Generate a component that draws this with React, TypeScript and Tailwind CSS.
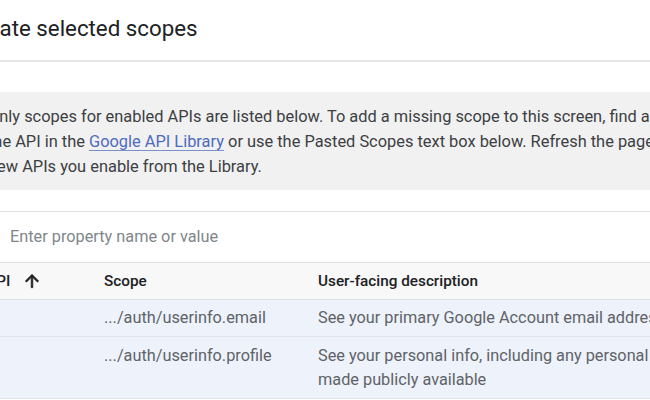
import React from "react";

export default function App() {
  return (
    <div
      className="w-[650px] h-[400px] overflow-hidden bg-white text-[#3c4043]"
      style={{ fontFamily: "Roboto, 'Liberation Sans', sans-serif" }}
    >
      <div className="h-[62px] flex items-start pt-[12px] border-b-2 border-[#e6e6e6]">
        <h1 className="ml-[-40px] text-[22.3px] leading-[32px] font-normal text-[#202124] whitespace-nowrap">
          Update selected scopes
        </h1>
      </div>
      <div className="h-[30px]" />
      <div className="h-[98px] bg-[#f1f1f1] pt-[12px]">
        <p className="ml-[-12px] text-[16.4px] leading-[25px] whitespace-nowrap">
          Only scopes for enabled APIs are listed below. To add a missing scope to this screen, find and enable
          <br />
          the API in the{" "}
          <a className="text-[#4d6bbf] underline underline-offset-[3px] decoration-[#7b8fc9]">Google API Library</a>{" "}
          or use the Pasted Scopes text box below. Refresh the page to see any
          <br />
          new APIs you enable from the Library.
        </p>
      </div>
      <div className="h-[21px]" />
      <div className="h-[51px] border-t border-[#e0e0e0] flex items-center pl-[10px]">
        <span className="text-[16.3px] text-[#80868b] whitespace-nowrap">Enter property name or value</span>
      </div>
      <div className="h-[38px] border-t border-b border-[#e0e0e0] bg-[#f8f8f8] flex items-center text-[15.3px] font-medium text-[#202124] whitespace-nowrap">
        <div className="w-[104px] shrink-0 flex items-center">
          <span className="ml-[-14px]">API</span>
          <svg width="20" height="20" viewBox="0 0 24 24" className="ml-[12px]">
            <path d="M4 12l1.41 1.41L11 7.83V20h2V7.83l5.58 5.59L20 12l-8-8-8 8z" fill="#202124" stroke="#202124" strokeWidth="0.8" />
          </svg>
        </div>
        <div className="w-[214px] shrink-0">Scope</div>
        <div className="flex-1">User-facing description</div>
      </div>
      <div className="h-[37px] bg-[#edf2fb] border-b border-[#dfe3ea] flex items-center text-[16.3px] text-[#5f6368] whitespace-nowrap">
        <div className="w-[104px] shrink-0" />
        <div className="w-[214px] shrink-0">.../auth/userinfo.email</div>
        <div className="flex-1">See your primary Google Account email address</div>
      </div>
      <div className="h-[62px] bg-[#edf2fb] border-b border-[#dfe3ea] flex items-start pt-[7px] text-[16.3px] leading-[24px] text-[#5f6368] whitespace-nowrap">
        <div className="w-[104px] shrink-0" />
        <div className="w-[214px] shrink-0">.../auth/userinfo.profile</div>
        <div className="flex-1">
          See your personal info, including any personal info you've
          <br />
          made publicly available
        </div>
      </div>
    </div>
  );
}
